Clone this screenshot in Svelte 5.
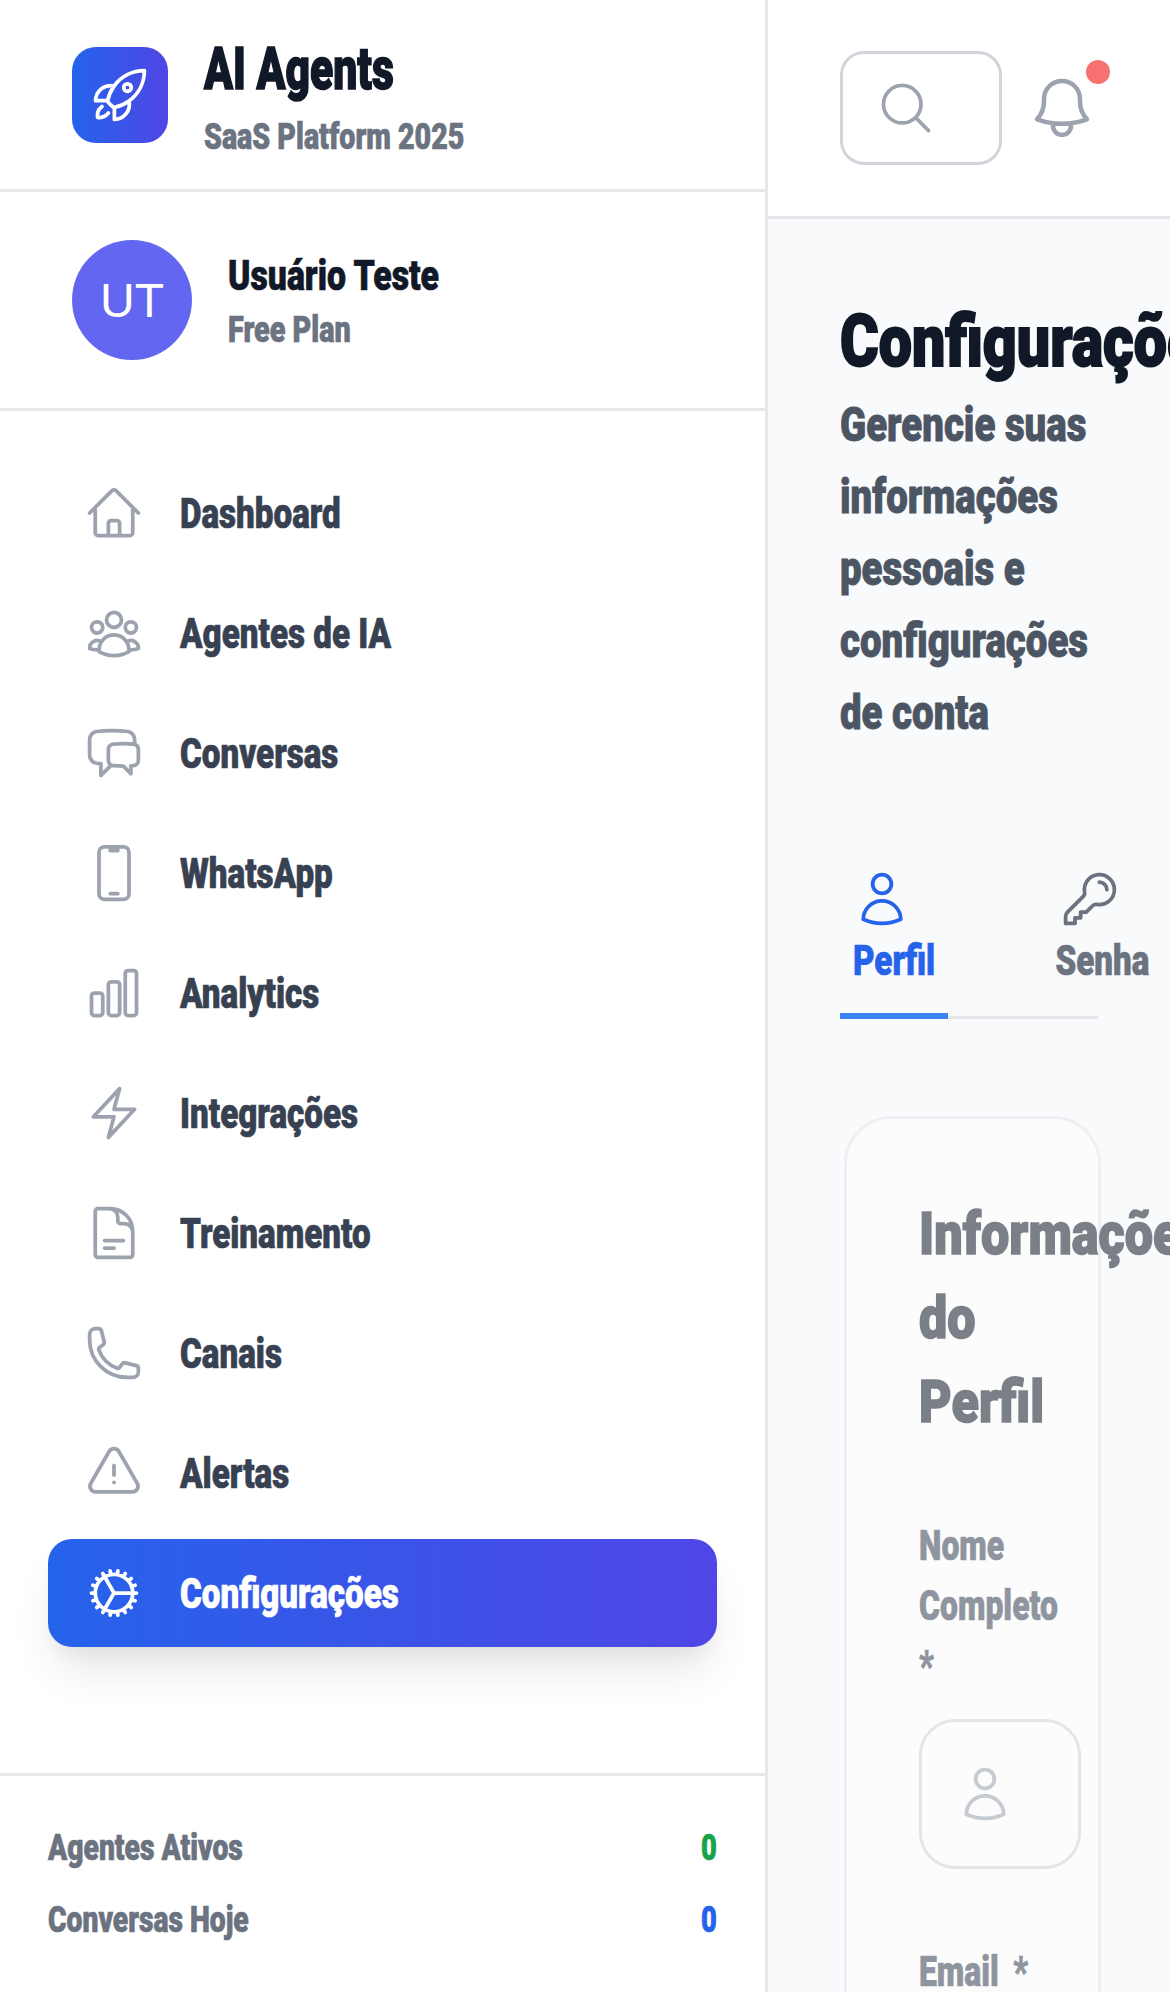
<script>
  const icons = {
    home: 'm2.25 12 8.954-8.955c.44-.439 1.152-.439 1.591 0L21.75 12M4.5 9.75v10.125c0 .621.504 1.125 1.125 1.125H9.75v-4.875c0-.621.504-1.125 1.125-1.125h2.25c.621 0 1.125.504 1.125 1.125V21h4.125c.621 0 1.125-.504 1.125-1.125V9.75M8.25 21h8.25',
    group: 'M18 18.72a9.094 9.094 0 0 0 3.741-.479 3 3 0 0 0-4.682-2.72m.94 3.198.001.031c0 .225-.012.447-.037.666A11.944 11.944 0 0 1 12 21c-2.17 0-4.207-.576-5.963-1.584A6.062 6.062 0 0 1 6 18.719m12 0a5.971 5.971 0 0 0-.941-3.197m0 0A5.995 5.995 0 0 0 12 12.75a5.995 5.995 0 0 0-5.058 2.772m0 0a3 3 0 0 0-4.681 2.72 8.986 8.986 0 0 0 3.74.477m.94-3.197a5.971 5.971 0 0 0-.94 3.197M15 6.75a3 3 0 1 1-6 0 3 3 0 0 1 6 0Zm6 3a2.25 2.25 0 1 1-4.5 0 2.25 2.25 0 0 1 4.5 0Zm-13.5 0a2.25 2.25 0 1 1-4.5 0 2.25 2.25 0 0 1 4.5 0Z',
    chat: 'M20.25 8.511c.884.284 1.5 1.128 1.5 2.097v4.286c0 1.136-.847 2.1-1.98 2.193-.34.027-.68.052-1.02.072v3.091l-3-3c-1.354 0-2.694-.055-4.02-.163a2.115 2.115 0 0 1-.825-.242m9.345-8.334a2.126 2.126 0 0 0-.476-.095 48.64 48.64 0 0 0-8.048 0c-1.131.094-1.976 1.057-1.976 2.192v4.286c0 .837.46 1.58 1.155 1.951m9.345-8.334V6.637c0-1.621-1.152-3.026-2.76-3.235A48.455 48.455 0 0 0 11.25 3c-2.115 0-4.198.137-6.24.402-1.608.209-2.76 1.614-2.76 3.235v6.226c0 1.621 1.152 3.026 2.76 3.235.577.075 1.157.14 1.74.194V21l4.155-4.155',
    phone: 'M10.5 1.5H8.25A2.25 2.25 0 0 0 6 3.75v16.5a2.25 2.25 0 0 0 2.25 2.25h7.5A2.25 2.25 0 0 0 18 20.25V3.75a2.25 2.25 0 0 0-2.25-2.25H13.5m-3 0V3h3V1.5m-3 0h3m-3 18.75h3',
    chart: 'M3 13.125C3 12.504 3.504 12 4.125 12h2.25c.621 0 1.125.504 1.125 1.125v6.75C7.5 20.496 6.996 21 6.375 21h-2.25A1.125 1.125 0 0 1 3 19.875v-6.75ZM9.75 8.625c0-.621.504-1.125 1.125-1.125h2.25c.621 0 1.125.504 1.125 1.125v11.25c0 .621-.504 1.125-1.125 1.125h-2.25a1.125 1.125 0 0 1-1.125-1.125V8.625ZM16.5 4.125c0-.621.504-1.125 1.125-1.125h2.25C20.496 3 21 3.504 21 4.125v15.75c0 .621-.504 1.125-1.125 1.125h-2.25a1.125 1.125 0 0 1-1.125-1.125V4.125Z',
    bolt: 'm3.75 13.5 10.5-11.25L12 10.5h8.25L9.75 21.75 12 13.5H3.75Z',
    doc: 'M19.5 14.25v-2.625a3.375 3.375 0 0 0-3.375-3.375h-1.5A1.125 1.125 0 0 1 13.5 7.125v-1.5a3.375 3.375 0 0 0-3.375-3.375H8.25m0 12.75h7.5m-7.5 3H12M10.5 2.25H5.625c-.621 0-1.125.504-1.125 1.125v17.25c0 .621.504 1.125 1.125 1.125h12.75c.621 0 1.125-.504 1.125-1.125V11.25a9 9 0 0 0-9-9Z',
    call: 'M2.25 6.75c0 8.284 6.716 15 15 15h2.25a2.25 2.25 0 0 0 2.25-2.25v-1.372c0-.516-.351-.966-.852-1.091l-4.423-1.106c-.44-.11-.902.055-1.173.417l-.97 1.293c-.282.376-.769.542-1.21.38a12.035 12.035 0 0 1-7.143-7.143c-.162-.441.004-.928.38-1.21l1.293-.97c.363-.271.527-.734.417-1.173L6.963 3.102a1.125 1.125 0 0 0-1.091-.852H4.5A2.25 2.25 0 0 0 2.25 4.5v2.25Z',
    warn: 'M12 9v3.75m-9.303 3.376c-.866 1.5.217 3.374 1.948 3.374h14.71c1.73 0 2.813-1.874 1.948-3.374L13.949 3.378c-.866-1.5-3.032-1.5-3.898 0L2.697 16.126ZM12 15.75h.007v.008H12v-.008Z',
    cog: 'M4.5 12a7.5 7.5 0 0 0 15 0m-15 0a7.5 7.5 0 1 1 15 0m-15 0H3m16.5 0H21m-1.5 0H12m-8.457 3.077 1.41-.513m14.095-5.13 1.41-.513M5.106 17.785l1.15-.964m11.49-9.642 1.149-.964M7.501 19.795l.75-1.3m7.5-12.99.75-1.3m-6.063 16.658.26-1.477m2.605-14.772.26-1.477m0 17.726-.26-1.477M10.698 4.614l-.26-1.477M16.5 19.794l-.75-1.299M7.5 4.205 12 12m6.894 5.785-1.149-.964M6.256 7.178l-1.15-.964m15.352 8.864-1.41-.513M4.954 9.435l-1.41-.514M12.002 12l-3.75 6.495',
    rocket: 'M15.59 14.37a6 6 0 0 1-5.84 7.38v-4.8m5.84-2.58a14.98 14.98 0 0 0 6.16-12.12A14.98 14.98 0 0 0 9.631 8.41m5.96 5.96a14.926 14.926 0 0 1-5.841 2.58m-.119-8.54a6 6 0 0 0-7.381 5.84h4.8m2.581-5.84a14.927 14.927 0 0 0-2.58 5.84m2.699 2.7c-.103.021-.207.041-.311.06a15.09 15.09 0 0 1-2.448-2.448 14.9 14.9 0 0 1 .06-.312m-2.24 2.39a4.493 4.493 0 0 0-1.757 4.306 4.493 4.493 0 0 0 4.306-1.758M16.5 9a1.5 1.5 0 1 1-3 0 1.5 1.5 0 0 1 3 0Z',
    bell: 'M14.857 17.082a23.848 23.848 0 0 0 5.454-1.31A8.967 8.967 0 0 1 18 9.75V9A6 6 0 0 0 6 9v.75a8.967 8.967 0 0 1-2.312 6.022c1.733.64 3.56 1.085 5.455 1.31m5.714 0a24.255 24.255 0 0 1-5.714 0m5.714 0a3 3 0 1 1-5.714 0',
    search: 'm21 21-5.197-5.197m0 0A7.5 7.5 0 1 0 5.196 5.196a7.5 7.5 0 0 0 10.607 10.607Z',
    user: 'M15.75 6a3.75 3.75 0 1 1-7.5 0 3.75 3.75 0 0 1 7.5 0ZM4.501 20.118a7.5 7.5 0 0 1 14.998 0A17.933 17.933 0 0 1 12 21.75c-2.676 0-5.216-.584-7.499-1.632Z',
    key: 'M15.75 5.25a3 3 0 0 1 3 3m3 0a6 6 0 0 1-7.029 5.912c-.563-.097-1.159.026-1.563.43L10.5 17.25H8.25v2.25H6v2.25H2.25v-2.818c0-.597.237-1.17.659-1.591l6.499-6.499c.404-.404.527-1 .43-1.563A6 6 0 1 1 21.75 8.25Z'
  };

  const nav = [
    { label: 'Dashboard', icon: 'home' },
    { label: 'Agentes de IA', icon: 'group' },
    { label: 'Conversas', icon: 'chat' },
    { label: 'WhatsApp', icon: 'phone' },
    { label: 'Analytics', icon: 'chart' },
    { label: 'Integrações', icon: 'bolt' },
    { label: 'Treinamento', icon: 'doc' },
    { label: 'Canais', icon: 'call' },
    { label: 'Alertas', icon: 'warn' },
    { label: 'Configurações', icon: 'cog', active: true }
  ];
</script>

{#snippet icon(name, cls)}
  <svg class={cls} viewBox="0 0 24 24" fill="none" stroke="currentColor" stroke-width="1.5" stroke-linecap="round" stroke-linejoin="round">
    <path d={icons[name]} />
  </svg>
{/snippet}

<div class="page">
  <aside class="sidebar">
    <div class="brand">
      <div class="logo">{@render icon('rocket', 'i60')}</div>
      <div>
        <div class="brand-name">AI Agents</div>
        <div class="brand-sub">SaaS Platform 2025</div>
      </div>
    </div>

    <div class="profile">
      <div class="avatar">UT</div>
      <div>
        <div class="user-name">Usuário Teste</div>
        <div class="user-plan">Free Plan</div>
      </div>
    </div>

    <nav class="nav">
      {#each nav as item}
        <a class="nav-item" class:active={item.active} href="#top">
          {@render icon(item.icon, 'nav-icon')}
          <span>{item.label}</span>
        </a>
      {/each}
    </nav>

    <div class="stats">
      <div class="stat"><span>Agentes Ativos</span><b class="green">0</b></div>
      <div class="stat"><span>Conversas Hoje</span><b class="blue">0</b></div>
    </div>
  </aside>

  <div class="main">
    <header class="topbar">
      <div class="search">{@render icon('search', 'i60')}</div>
      <div class="bell">
        {@render icon('bell', 'i72')}
        <span class="dot"></span>
      </div>
    </header>

    <main class="content">
      <h1>Configurações</h1>
      <p class="lead">Gerencie suas informações pessoais e configurações de conta</p>

      <div class="tabs">
        <div class="tab on">{@render icon('user', 'tab-icon')}<span>Perfil</span></div>
        <div class="tab">{@render icon('key', 'tab-icon')}<span>Senha</span></div>
      </div>

      <section class="card">
        <h2>Informações do Perfil</h2>
        <div class="field">
          <div class="label">Nome Completo *</div>
          <div class="input">{@render icon('user', 'i60')}</div>
        </div>
        <div class="field">
          <div class="label one-line">Email&nbsp;&#8201;*</div>
        </div>
      </section>
    </main>
  </div>
</div>

<style>
  :global(body) {
    margin: 0;
    background: #fff;
  }

  .page {
    display: flex;
    width: 1170px;
    height: 1992px;
    overflow: hidden;
    /* no condensed face installed: heavy Roboto squeezed horizontally */
    font-family: Roboto, "Liberation Sans", sans-serif;
    font-weight: 900;
  }

  .brand-name, .brand-sub, .user-name, .user-plan,
  .nav-item span, .stat span, .stat b, h1, h2, .lead, .label {
    transform: translateY(var(--dy, 0)) scaleX(var(--k));
    transform-origin: left center;
    white-space: nowrap;
    -webkit-text-stroke: var(--s, 0.7px) currentColor;
  }

  h1, h2, .lead, .label {
    white-space: normal;
    width: calc(100% / var(--k));
  }

  .label.one-line {
    white-space: nowrap;
  }

  .sidebar {
    flex: 0 0 768px;
    box-sizing: border-box;
    display: flex;
    flex-direction: column;
    background: #fff;
    border-right: 3px solid #e5e7eb;
  }

  .brand {
    box-sizing: border-box;
    height: 192px;
    display: flex;
    align-items: center;
    gap: 36px;
    padding: 0 72px;
    border-bottom: 3px solid #e5e7eb;
  }

  .logo {
    width: 96px;
    height: 96px;
    border-radius: 24px;
    background: linear-gradient(90deg, #2563eb, #4f46e5);
    color: #fff;
    display: flex;
    align-items: center;
    justify-content: center;
  }

  :global(.i60) { width: 60px; height: 60px; flex: none; }
  :global(.i72) { width: 72px; height: 72px; display: block; }

  .brand-name {
    --k: 0.71;
    --dy: -2px;
    --s: 1.6px;
    font-size: 60px;
    line-height: 84px;
    color: #111827;
  }

  .brand-sub {
    --k: 0.795;
    font-size: 36px;
    line-height: 48px;
    color: #6b7280;
  }

  .profile {
    display: flex;
    align-items: center;
    gap: 36px;
    padding: 48px 72px;
    border-bottom: 3px solid #e5e7eb;
  }

  .avatar {
    width: 120px;
    height: 120px;
    border-radius: 50%;
    background: #6366f1;
    color: #fff;
    font-family: "Liberation Sans", sans-serif;
    font-weight: 400;
    font-size: 48px;
    display: flex;
    align-items: center;
    justify-content: center;
  }

  .user-name {
    --k: 0.805;
    font-size: 42px;
    line-height: 60px;
    color: #111827;
  }

  .user-plan {
    --k: 0.8;
    font-size: 36px;
    line-height: 48px;
    color: #6b7280;
  }

  .nav {
    flex: 1;
    display: flex;
    flex-direction: column;
    gap: 12px;
    padding: 48px;
  }

  .nav-item {
    height: 108px;
    display: flex;
    align-items: center;
    gap: 36px;
    padding: 0 36px;
    border-radius: 24px;
    font-size: 42px;
    color: #374151;
    text-decoration: none;
  }

  .nav-item span { --k: 0.79; }

  :global(.nav-icon) {
    width: 60px;
    height: 60px;
    flex: none;
    color: #9ca3af;
  }

  .nav-item.active {
    background: linear-gradient(90deg, #2563eb, #4f46e5);
    color: #fff;
    box-shadow: 0 30px 45px -9px rgba(0, 0, 0, 0.1), 0 12px 18px -6px rgba(0, 0, 0, 0.05);
  }

  .nav-item.active :global(.nav-icon) {
    color: #fff;
  }

  .stats {
    display: flex;
    flex-direction: column;
    gap: 24px;
    padding: 48px;
    border-top: 3px solid #e5e7eb;
  }

  .stat {
    display: flex;
    justify-content: space-between;
    font-size: 36px;
    line-height: 48px;
    color: #6b7280;
  }

  .stat span { --k: 0.785; }
  .stat b { --k: 0.76; transform-origin: right center; font-weight: 900; }

  .green { color: #16a34a; }
  .blue { color: #2563eb; }

  .main {
    flex: 1;
    min-width: 0;
    background: #f9fafb;
  }

  .topbar {
    height: 216px;
    display: flex;
    align-items: center;
    gap: 24px;
    padding: 0 72px;
    background: #fff;
    border-bottom: 3px solid #e5e7eb;
  }

  .search {
    box-sizing: border-box;
    flex: none;
    width: 162px;
    height: 114px;
    padding-left: 33px;
    display: flex;
    align-items: center;
    border: 3px solid #d1d5db;
    border-radius: 24px;
    color: #9ca3af;
  }

  .bell {
    position: relative;
    flex: none;
    color: #9ca3af;
  }

  .dot {
    position: absolute;
    top: -12px;
    right: -12px;
    width: 24px;
    height: 24px;
    border-radius: 50%;
    background: #f87171;
  }

  .content {
    padding: 72px;
  }

  h1 {
    --k: 0.82;
    --dy: 3px;
    --s: 2px;
    margin: 0;
    font-size: 72px;
    line-height: 96px;
    font-weight: 900;
    color: #111827;
  }

  .lead {
    --k: 0.8;
    --dy: 2px;
    --s: 0.9px;
    margin: 0 0 96px;
    font-size: 48px;
    line-height: 72px;
    color: #4b5563;
  }

  .tabs {
    box-sizing: border-box;
    height: 176px;
    display: flex;
    gap: 96px;
    border-bottom: 3px solid #e5e7eb;
  }

  .tab {
    flex: none;
    width: 108px;
    height: 176px;
    box-sizing: border-box;
    padding: 26px 0 24px;
    display: flex;
    flex-direction: column;
    align-items: center;
    font-size: 42px;
    line-height: 60px;
    color: #6b7280;
  }

  .tab + .tab { width: 116px; }

  .tab span {
    transform: translateY(2px) scaleX(0.79);
    white-space: nowrap;
    -webkit-text-stroke: 0.7px currentColor;
  }

  .tab.on {
    color: #2563eb;
    border-bottom: 6px solid #3b82f6;
  }

  :global(.tab-icon) {
    width: 60px;
    height: 60px;
    flex: none;
    margin-right: 24px;
  }

  .card {
    box-sizing: border-box;
    width: 257px;
    margin: 97px 0 0 4px;
    padding: 72px;
    background: #fff;
    border: 3px solid #e5e7eb;
    border-radius: 48px;
    opacity: 0.54;
  }

  h2 {
    --k: 0.84;
    --dy: 1px;
    --s: 1.6px;
    margin: 0 0 72px;
    font-size: 60px;
    line-height: 84px;
    font-weight: 900;
    color: #111827;
  }

  .field {
    margin-bottom: 72px;
  }

  .label {
    --k: 0.76;
    --dy: 1px;
    margin-bottom: 24px;
    font-size: 42px;
    line-height: 60px;
    color: #374151;
  }

  .input {
    box-sizing: border-box;
    width: 162px;
    height: 150px;
    padding-left: 33px;
    display: flex;
    align-items: center;
    border: 3px solid #d1d5db;
    border-radius: 36px;
    color: #9ca3af;
  }
</style>
